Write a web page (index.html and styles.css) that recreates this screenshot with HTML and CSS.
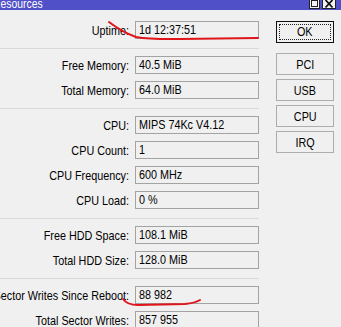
FILE: index.html
```html
<!DOCTYPE html>
<html lang="en">
<head>
    <meta charset="UTF-8">
    <meta name="viewport" content="width=device-width, initial-scale=1.0">
    <title>Resources</title>
    <link rel="stylesheet" href="styles.css">
</head>
<body>
    <div class="titlebar">
        <span class="title">Resources</span>
        <div class="winbtns">
            <svg class="winbtn" width="11" height="10" viewBox="0 0 11 10">
                <rect x="0.5" y="-1" width="10" height="10.5" fill="#f4f4f4" stroke="#222"/>
                <rect x="2.5" y="1.5" width="6" height="6" fill="none" stroke="#222"/>
            </svg>
            <svg class="winbtn" width="14" height="10" viewBox="0 0 14 10">
                <rect x="0.5" y="-1" width="13" height="10.5" fill="#f4f4f4" stroke="#222"/>
                <path d="M3.5 1 L10.5 8.5 M10.5 1 L3.5 8.5" stroke="#111" stroke-width="1.8"/>
            </svg>
        </div>
    </div>

    <div class="window">
        <div class="fields">
            <div class="group">
                <div class="row"><div class="label">Uptime:</div><div class="value"><span>1d 12:37:51</span></div></div>
            </div>
            <div class="group">
                <div class="row"><div class="label">Free Memory:</div><div class="value"><span>40.5 MiB</span></div></div>
                <div class="row"><div class="label">Total Memory:</div><div class="value"><span>64.0 MiB</span></div></div>
            </div>
            <div class="group">
                <div class="row"><div class="label">CPU:</div><div class="value"><span>MIPS 74Kc V4.12</span></div></div>
                <div class="row"><div class="label">CPU Count:</div><div class="value"><span>1</span></div></div>
                <div class="row"><div class="label">CPU Frequency:</div><div class="value"><span>600 MHz</span></div></div>
                <div class="row"><div class="label">CPU Load:</div><div class="value"><span>0 %</span></div></div>
            </div>
            <div class="group">
                <div class="row"><div class="label">Free HDD Space:</div><div class="value"><span>108.1 MiB</span></div></div>
                <div class="row"><div class="label">Total HDD Size:</div><div class="value"><span>128.0 MiB</span></div></div>
            </div>
            <div class="group last">
                <div class="row"><div class="label">Sector Writes Since Reboot:</div><div class="value"><span>88 982</span></div></div>
                <div class="row"><div class="label">Total Sector Writes:</div><div class="value"><span>857 955</span></div></div>
            </div>
        </div>

        <div class="buttons">
            <button type="button" class="btn btn-ok"><span class="focus"><span>OK</span></span></button>
            <button type="button" class="btn"><span>PCI</span></button>
            <button type="button" class="btn"><span>USB</span></button>
            <button type="button" class="btn"><span>CPU</span></button>
            <button type="button" class="btn"><span>IRQ</span></button>
        </div>
    </div>

    <!-- red pen marks drawn over the screenshot -->
    <svg class="marks" width="341" height="327" viewBox="0 0 341 327">
        <path d="M109 22 Q 122 32 136 37 Q 150 39.5 180 39 L 258 38" fill="none" stroke="#e0151a" stroke-width="2" stroke-linecap="round"/>
        <path d="M123 299 Q 127 305 138 305 L 185 304 Q 195 303 200 300" fill="none" stroke="#e0151a" stroke-width="2" stroke-linecap="round"/>
    </svg>
</body>
</html>
```

FILE: styles.css
```css
/* Fenêtre */
body {
    font-family: "Liberation Sans", Arial, sans-serif;
    font-size: 13.5px;
    color: #000;
    background-color: #f0f0f0;
    margin: 0;
    padding: 0;
    overflow: hidden;
}

.titlebar {
    height: 10px;
    background-color: #5050c8;
    display: flex;
    justify-content: space-between;
    overflow: hidden;
}

/* police étroite : on resserre l'Arial */
.title {
    color: white;
    font-size: 13px;
    line-height: 10px;
    margin-top: -1.5px;
    margin-left: -7.5px;
    white-space: nowrap;
    transform: scaleX(0.8);
    transform-origin: left center;
}

.winbtns {
    display: flex;
    gap: 2px;
    padding-right: 5px;
    margin-top: -1px;
}

.winbtn {
    display: block;
}

.window {
    display: flex;
    gap: 17px;
    padding-top: 4px;
}

/* Colonne des champs */
.fields {
    width: 259px;
}

.group {
    display: flex;
    flex-direction: column;
    gap: 7px;
    padding: 7px 0 9px;
    border-bottom: 1px solid #d9d9d9;
}

.group.last {
    border-bottom: none;
}

.row {
    display: flex;
    align-items: center;
    gap: 6px;
    height: 18px;
}

.label {
    width: 129px;
    flex-shrink: 0;
    display: flex;
    justify-content: flex-end;
    white-space: nowrap;
    transform: scaleX(0.8);
    transform-origin: right center;
}

.value {
    width: 124px;
    height: 18px;
    box-sizing: border-box;
    border: 1px solid #a3a3a3;
    padding: 0 3px;
    line-height: 16px;
    white-space: nowrap;
}

.value span {
    display: inline-block;
    transform: scaleX(0.8);
    transform-origin: left center;
}

/* Boutons */
.buttons {
    width: 58px;
    margin-top: 7px;
    display: flex;
    flex-direction: column;
    gap: 4px;
}

.btn {
    width: 58px;
    height: 22px;
    padding: 0;
    font-family: inherit;
    font-size: 13.5px;
    color: #000;
    background-color: #f0f0f0;
    border: 1px solid #adadad;
    border-radius: 0;
}

.btn span {
    display: inline-block;
    transform: scaleX(0.8);
}

.btn-ok {
    border-color: #111;
    margin-bottom: 6px;
    padding: 2px;
}

.btn-ok .focus {
    display: block;
    height: 100%;
    box-sizing: border-box;
    border: 1px dotted #222;
    line-height: 14px;
    transform: none;
}

.marks {
    position: absolute;
    top: 0;
    left: 0;
    pointer-events: none;
}
```
